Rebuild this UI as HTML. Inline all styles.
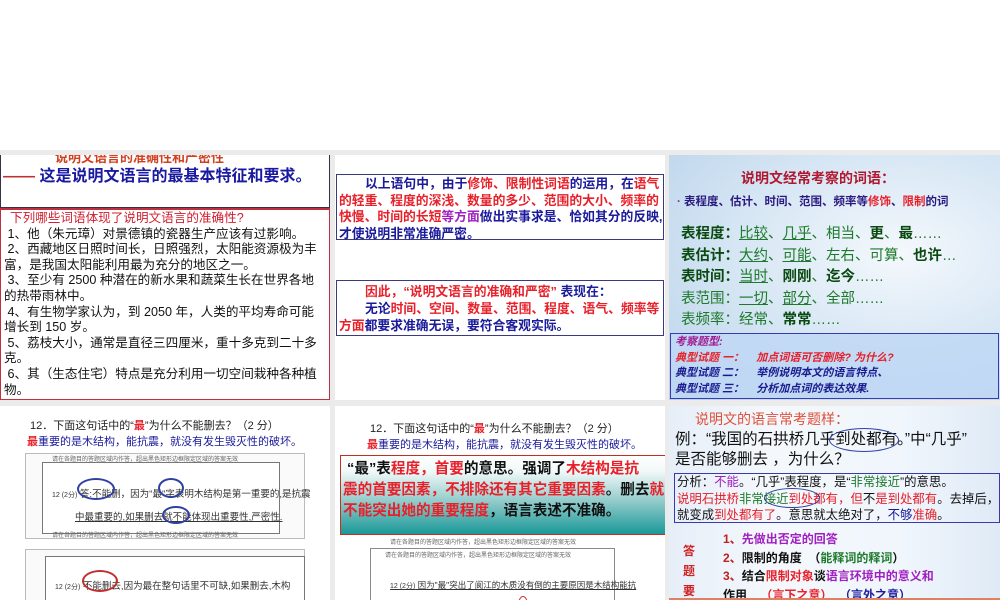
<!DOCTYPE html>
<html><head><meta charset="utf-8"><style>
*{margin:0;padding:0;box-sizing:border-box}
body{width:1000px;height:600px;overflow:hidden;background:#fff;font-family:"Liberation Sans","Noto Sans CJK SC",sans-serif;position:relative}
.g{position:absolute;background:#ebebeb}
.p{position:absolute;overflow:hidden;background:#fff}
.a{position:absolute;white-space:nowrap}
.nw{white-space:nowrap}
.r{color:#e8202a}.b{color:#1a1a9a}.gr{color:#1d7a2a}.dg{color:#0a4a10}
.u{text-decoration:underline}
.sheet{position:absolute;border:1px solid #999;background:#fafafa}
.sm{font-size:6px;color:#666}
.hw{font-size:9.5px;color:#333}
</style></head><body>
<div class="g" style="left:0;top:150px;width:1000px;height:5px"></div>
<div class="g" style="left:330px;top:150px;width:5px;height:450px"></div>
<div class="g" style="left:665px;top:150px;width:4px;height:450px"></div>
<div class="g" style="left:0;top:400px;width:1000px;height:6px"></div>

<!-- panel 1 -->
<div class="p" style="left:0;top:155px;width:330px;height:245px">
 <div style="position:absolute;left:0;top:0;width:330px;height:53px;border-left:1px solid #334;border-right:1px solid #334;border-bottom:1px solid #334"></div>
 <div class="a" style="left:55px;top:-8px;font-size:13px;color:#d04020;font-weight:bold">说明文语言的准确性和严密性</div>
 <div class="a" style="left:3px;top:7px;font-size:16px;font-weight:bold;color:#1a1aa0"><span style="color:#c03030">——</span> 这是说明文语言的最基本特征和要求。</div>
 <div style="position:absolute;left:0;top:53px;width:330px;height:192px;border:1px solid #c03040;border-top:2px solid #c03040"></div>
 <div class="nw" style="position:absolute;left:4px;top:56px;font-size:12.6px;line-height:15.6px;color:#111">
  <div style="color:#d02030;padding-left:6px">下列哪些词语体现了说明文语言的准确性?</div>
  <div>&nbsp;1、他（朱元璋）对景德镇的瓷器生产应该有过影响。</div>
  <div>&nbsp;2、西藏地区日照时间长，日照强烈，太阳能资源极为丰</div>
  <div>富，是我国太阳能利用最为充分的地区之一。</div>
  <div>&nbsp;3、至少有 2500 种潜在的新水果和蔬菜生长在世界各地</div>
  <div>的热带雨林中。</div>
  <div>&nbsp;4、有生物学家认为，到 2050 年，人类的平均寿命可能</div>
  <div>增长到 150 岁。</div>
  <div>&nbsp;5、荔枝大小，通常是直径三四厘米，重十多克到二十多</div>
  <div>克。</div>
  <div>&nbsp;6、其（生态住宅）特点是充分利用一切空间栽种各种植</div>
  <div>物。</div>
 </div>
</div>

<!-- panel 2 -->
<div class="p" style="left:335px;top:155px;width:330px;height:245px">
 <div style="position:absolute;left:1px;top:19px;width:328px;height:66px;border:1.5px solid #3a3a80"></div>
 <div class="nw" style="position:absolute;left:4px;top:21px;font-size:12.8px;line-height:16.5px;font-weight:bold;color:#1a1a9a">
  <div><span style="padding-left:26px"></span>以上语句中，由于<span class="r">修饰、限制性词语</span>的运用，在<span class="r">语气</span></div>
  <div class="r">的轻重、程度的深浅、数量的多少、范围的大小、频率的</div>
  <div><span class="r">快慢、时间的长短</span><span style="color:#a020c0">等方面</span>做出实事求是、恰如其分的反映,</div>
  <div>才使说明非常准确严密。</div>
 </div>
 <div style="position:absolute;left:1px;top:125px;width:328px;height:56px;border:1.5px solid #3a3a80"></div>
 <div class="nw" style="position:absolute;left:4px;top:128px;font-size:12.8px;line-height:17px;font-weight:bold;color:#1a1a9a">
  <div style="padding-left:26px"><span class="r">因此，“说明文语言的准确和严密”</span> 表现在：</div>
  <div><span style="padding-left:26px"></span>无论<span class="r">时间、空间、数量、范围、程度、语气、频率等</span></div>
  <div><span class="r">方面</span>都要求准确无误，要符合客观实际。</div>
 </div>
</div>

<!-- panel 3 -->
<div class="p" style="left:669px;top:155px;width:331px;height:245px;background:radial-gradient(ellipse at 70% 40%,#f4f8fc 0%,#d6e6f4 50%,#b8d2ea 100%)">
 <div class="a" style="left:72px;top:13px;font-size:14px;font-weight:bold;color:#b01830">说明文经常考察的词语：</div>
 <div class="a" style="left:8px;top:38px;font-size:11.5px;font-weight:bold;color:#2a1a80"><span style="color:#a02090">·</span> 表程度、估计、时间、范围、频率等<span class="r">修饰</span>、<span class="r">限制</span>的词</div>
 <div class="gr nw" style="position:absolute;left:12px;top:69px;font-size:14.5px;line-height:21.5px">
  <div><b class="dg">表程度：</b><span class="u">比较</span>、<span class="u">几乎</span>、相当、<b class="dg">更</b>、<b class="dg">最</b>……</div>
  <div><b class="dg">表估计：</b><span class="u">大约</span>、<span class="u">可能</span>、左右、可算、<b class="dg">也许</b>…</div>
  <div><b class="dg">表时间：</b><span class="u">当时</span>、<b class="dg">刚刚</b>、<b class="dg">迄今</b>……</div>
  <div>表范围：<span class="u">一切</span>、<span class="u">部分</span>、全部……</div>
  <div>表频率：经常、<b class="dg">常常</b>……</div>
 </div>
 <div style="position:absolute;left:1px;top:178px;width:329px;height:66px;border:1.5px solid #3a3ab0;background:rgba(190,215,245,.8)"></div>
 <div class="nw" style="position:absolute;left:6px;top:180px;font-size:11px;line-height:15.5px;font-weight:bold;font-style:italic">
  <div style="color:#a01890">考察题型:</div>
  <div class="r">典型试题 一：&nbsp;&nbsp;&nbsp; 加点词语可否删除? 为什么?</div>
  <div style="color:#1a1a90">典型试题 二：&nbsp;&nbsp;&nbsp; 举例说明本文的语言特点、</div>
  <div style="color:#1a1a90">典型试题 三：&nbsp;&nbsp;&nbsp; 分析加点词的表达效果.</div>
 </div>
</div>

<!-- panel 4 -->
<div class="p" style="left:0;top:406px;width:330px;height:194px">
 <div class="a" style="left:30px;top:11px;font-size:11px;color:#222">12．下面这句话中的“<span class="r"><b>最</b></span>”为什么不能删去？（2 分）</div>
 <div class="a" style="left:27px;top:27px;font-size:11px;color:#1a1a9a"><span class="r"><b>最</b></span>重要的是木结构，能抗震，就没有发生毁灭性的破坏。</div>
 <div class="sheet" style="left:25px;top:47px;width:280px;height:86px;border-color:#bbb"></div>
 <div class="sheet" style="left:42px;top:56px;width:238px;height:72px;background:#fff;border-color:#777"></div>
 <div class="a sm" style="left:52px;top:48px">请在各题目的答题区域内作答，超出黑色矩形边框限定区域的答案无效</div>
 <div class="a hw" style="left:52px;top:80px"><span style="font-size:7px">12 (2分)</span> 答:不能删，因为"最"字表明木结构是第一重要的,是抗震</div>
 <div class="a hw" style="left:75px;top:103px;text-decoration:underline">中最重要的,如果删去就不能体现出重要性,严密性.</div>
 <div style="position:absolute;left:77px;top:72px;width:38px;height:22px;border:2px solid #3040a0;border-radius:50%"></div>
 <div style="position:absolute;left:158px;top:72px;width:26px;height:20px;border:2px solid #3040a0;border-radius:50%"></div>
 <div style="position:absolute;left:162px;top:100px;width:28px;height:18px;border:2px solid #3040a0;border-radius:50%"></div>
 <div class="a sm" style="left:52px;top:124px">请在各题目的答题区域内作答，超出黑色矩形边框限定区域的答案无效</div>
 <div class="sheet" style="left:25px;top:143px;width:280px;height:60px;border-color:#bbb"></div>
 <div class="sheet" style="left:45px;top:150px;width:260px;height:55px;background:#fff;border-color:#777"></div>
 <div class="a hw" style="left:55px;top:172px"><span style="font-size:7px">12 (2分)</span> 不能删去,因为最在整句话里不可缺,如果删去,木构</div>
 <div style="position:absolute;left:82px;top:164px;width:36px;height:22px;border:2px solid #c03030;border-radius:50%"></div>
</div>

<!-- panel 5 -->
<div class="p" style="left:335px;top:406px;width:330px;height:194px">
 <div class="a" style="left:35px;top:14px;font-size:11px;color:#222">12．下面这句话中的“<span class="r"><b>最</b></span>”为什么不能删去？（2 分）</div>
 <div class="a" style="left:32px;top:30px;font-size:11px;color:#1a1a9a"><span class="r"><b>最</b></span>重要的是木结构，能抗震，就没有发生毁灭性的破坏。</div>
 <div style="position:absolute;left:5px;top:49px;width:330px;height:80px;border:1.5px solid #c03020;background:linear-gradient(#fff 0%,#f0f8f8 20%,#8cc8c8 60%,#1a9898 100%)"></div>
 <div class="nw" style="position:absolute;left:8px;top:53px;font-size:14.6px;line-height:21px;font-weight:bold;color:#111">
  <div>&nbsp;“最”表<span class="r">程度，首要</span>的意思。强调了<span class="r">木结构是抗</span></div>
  <div class="r">震的首要因素，不排除还有其它重要因素<span style="color:#111">。删去</span>就</div>
  <div><span class="r">不能突出她的重要程度</span>，语言表述不准确。</div>
 </div>
 <div class="a sm" style="left:55px;top:131px">请在各题目的答题区域内作答，超出黑色矩形边框限定区域的答案无效</div>
 <div class="sheet" style="left:35px;top:142px;width:245px;height:60px;background:#fff;border-color:#888"></div>
 <div class="a sm" style="left:50px;top:144px">请在各题目的答题区域内作答，超出黑色矩形边框限定区域的答案无效</div>
 <div class="a hw" style="left:55px;top:173px;font-size:8.5px;text-decoration:underline"><span style="font-size:7px">12 (2分)</span> 因为"最"突出了阆江的木质没有倒的主要原因是木结构能抗</div>
 <div style="position:absolute;left:183px;top:190px;width:10px;height:18px;border:1.5px solid #d03030;border-radius:50%"></div>
</div>

<!-- panel 6 -->
<div class="p" style="left:669px;top:406px;width:331px;height:194px;background:linear-gradient(90deg,#e6eef8,#f4f8fc 30%,#f0f6fc 70%,#dfeaf6)">
 <div class="a" style="left:26px;top:3px;font-size:14px;color:#e05038">说明文的语言常考题样：</div>
 <div class="nw" style="position:absolute;left:6px;top:24px;font-size:15.5px;line-height:20px;color:#111">
  <div>例：“我国的石拱桥几乎到处都有。”中“几乎”</div>
  <div>是否能够删去 ，为什么？</div>
 </div>
 <div style="position:absolute;left:160px;top:22px;width:70px;height:24px;border:1.5px solid #3040a0;border-radius:50%"></div>
 <div style="position:absolute;left:5px;top:67px;width:326px;height:50px;border:1.5px solid #3a3ab0"></div>
 <div class="nw" style="position:absolute;left:8px;top:68px;font-size:12.4px;line-height:16.5px;color:#111">
  <div>分析：<span style="color:#a020c0">不能</span>。“几乎”表程度，是“<span class="gr">非常接近</span>”的意思。</div>
  <div><span class="r">说明石拱桥</span><span class="gr">非常接近</span><span class="r">到处都有，但</span>不<span class="r">是到处都有</span>。去掉后，</div>
  <div>就变成<span class="r">到处都有了</span>。意思就太绝对了，<span class="b">不够</span><span class="r">准确</span>。</div>
 </div>
 <div style="position:absolute;left:95px;top:82px;width:56px;height:20px;border:1.5px solid #3040a0;border-radius:50%"></div>
 <div class="nw" style="position:absolute;left:54px;top:124px;font-size:12px;line-height:18.5px;font-weight:bold;color:#111">
  <div><span style="color:#c02020">1、</span><span style="color:#a020c0">先做出否定的回答</span></div>
  <div><span style="color:#c02020">2、</span>限制的角度 &nbsp;（<span class="gr">能释词的释词</span>）</div>
  <div><span style="color:#c02020">3、</span>结合<span class="r">限制对象</span>谈<span style="color:#a020c0">语言环境中的意义和</span></div>
  <div>作用 &nbsp;&nbsp;&nbsp;<span class="r">（言下之意）</span> &nbsp;<span class="b">（言外之意）</span></div>
 </div>
 <div style="position:absolute;left:14px;top:135px;font-size:12px;line-height:20px;font-weight:bold;color:#d02020;width:14px">答题要点</div>
 <div style="position:absolute;left:0;top:192px;width:331px;height:2px;background:#e08060"></div>
</div>
</body></html>
